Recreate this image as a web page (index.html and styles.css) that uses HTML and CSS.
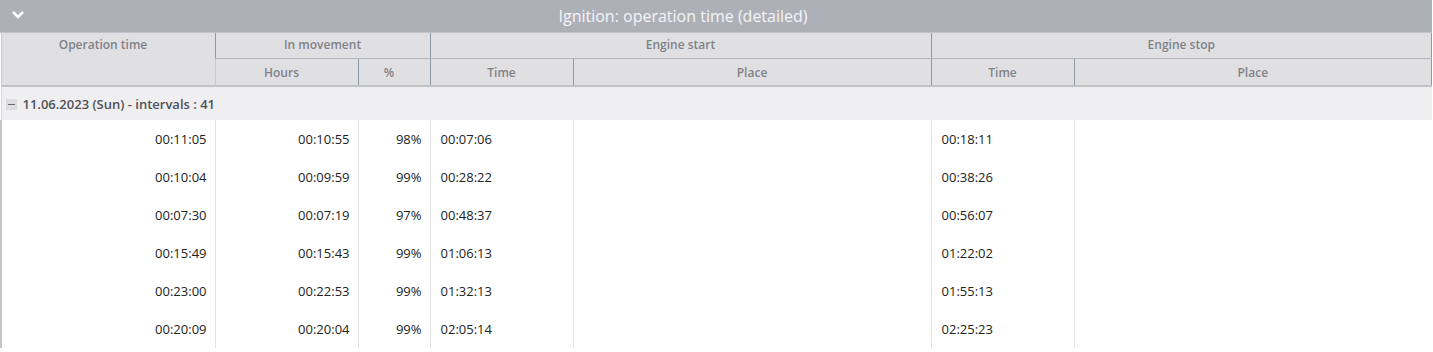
FILE: index.html
```html
<!DOCTYPE html>
<html>
<head>
<meta charset="utf-8">
<link rel="stylesheet" href="styles.css">
</head>
<body>
<div class="panel">
  <div class="titlebar">
    <svg class="chev" width="14" height="10" viewBox="0 0 14 10"><path d="M2 2 L7 7 L12 2" fill="none" stroke="#fff" stroke-width="2.6"/></svg>
    <div class="title">Ignition: operation time (detailed)</div>
  </div>
  <table class="grid">
    <colgroup>
      <col style="width:214px"><col style="width:143px"><col style="width:72px"><col style="width:143px"><col style="width:358px"><col style="width:143px"><col>
    </colgroup>
    <thead>
      <tr class="h1">
        <th rowspan="2" class="top num">Operation time</th>
        <th colspan="2">In movement</th>
        <th colspan="2">Engine start</th>
        <th colspan="2" class="last">Engine stop</th>
      </tr>
      <tr class="h2">
        <th class="num">Hours</th><th class="num">%</th><th>Time</th><th>Place</th><th>Time</th><th class="last">Place</th>
      </tr>
    </thead>
    <tbody>
      <tr class="group"><td colspan="7"><span class="minus"></span>11.06.2023 (Sun) - intervals : 41</td></tr>
      <tr><td class="r">00:11:05</td><td class="r">00:10:55</td><td class="r">98%</td><td>00:07:06</td><td></td><td>00:18:11</td><td></td></tr>
      <tr><td class="r">00:10:04</td><td class="r">00:09:59</td><td class="r">99%</td><td>00:28:22</td><td></td><td>00:38:26</td><td></td></tr>
      <tr><td class="r">00:07:30</td><td class="r">00:07:19</td><td class="r">97%</td><td>00:48:37</td><td></td><td>00:56:07</td><td></td></tr>
      <tr><td class="r">00:15:49</td><td class="r">00:15:43</td><td class="r">99%</td><td>01:06:13</td><td></td><td>01:22:02</td><td></td></tr>
      <tr><td class="r">00:23:00</td><td class="r">00:22:53</td><td class="r">99%</td><td>01:32:13</td><td></td><td>01:55:13</td><td></td></tr>
      <tr><td class="r">00:20:09</td><td class="r">00:20:04</td><td class="r">99%</td><td>02:05:14</td><td></td><td>02:25:23</td><td></td></tr>
    </tbody>
  </table>
</div>
</body>
</html>
```

FILE: styles.css
```css
* { box-sizing: border-box; }
html, body { margin: 0; padding: 0; background: #fff; }
body { font-family: "Open Sans", "Liberation Sans", sans-serif; overflow: hidden; }
.panel { width: 1432px; }
.titlebar {
  height: 33px;
  background: #aeb0b8;
  border-bottom: 1px solid #c2c4ca;
  display: flex;
  align-items: center;
  position: relative;
  padding-right: 66px;
}
.chev { position: absolute; left: 11px; top: 10px; }
.title {
  flex: 1;
  text-align: center;
  color: #f4f5f7;
  font-size: 16px;
  line-height: 32px;
}
.grid {
  width: 1432px;
  border-collapse: collapse;
  table-layout: fixed;
}
.grid th {
  background: #e0e0e2;
  color: #80828a;
  font-size: 12px;
  font-weight: 600;
  padding: 0;
  text-align: center;
  border-left: 1px solid #8e9aa5;
}
.grid th:first-child { border-left: 1px solid #c8cacf; }
.grid th.last { border-right: 1px solid #8e9aa5; }
.h1 th { height: 25px; border-bottom: 1px solid #b3b7bd; padding-bottom: 2px; }
.h1 th.top { vertical-align: top; padding-top: 3px; }
.h2 th { height: 28px; border-bottom: 2px solid #c0c2c6; padding-top: 2px; }
.h1 th.top { border-bottom: 2px solid #c0c2c6; }
.grid th.num { padding-right: 10px; }
.group td {
  background: #efeff1;
  height: 34px;
  font-size: 13px;
  font-weight: 600;
  color: #505257;
  padding: 0 0 0 4px;
  border-left: 1px solid #d8d8da;
}
.minus {
  display: inline-block;
  width: 11px;
  height: 11px;
  background: #dcdde0;
  margin-right: 6px;
  vertical-align: -1px;
  position: relative;
}
.minus::after {
  content: "";
  position: absolute;
  left: 2px; right: 2px; top: 5px;
  height: 1px;
  background: #6a6c72;
}
tbody tr:not(.group) td {
  height: 38px;
  font-size: 13px;
  color: #222;
  padding: 0 9px 0 10px;
  border-left: 1px solid #e2e2e4;
}
tbody tr:not(.group) td:first-child { border-left: 2px solid #c4c4c6; }
tbody tr:not(.group) td.r { text-align: right; padding-right: 8px; }
```
